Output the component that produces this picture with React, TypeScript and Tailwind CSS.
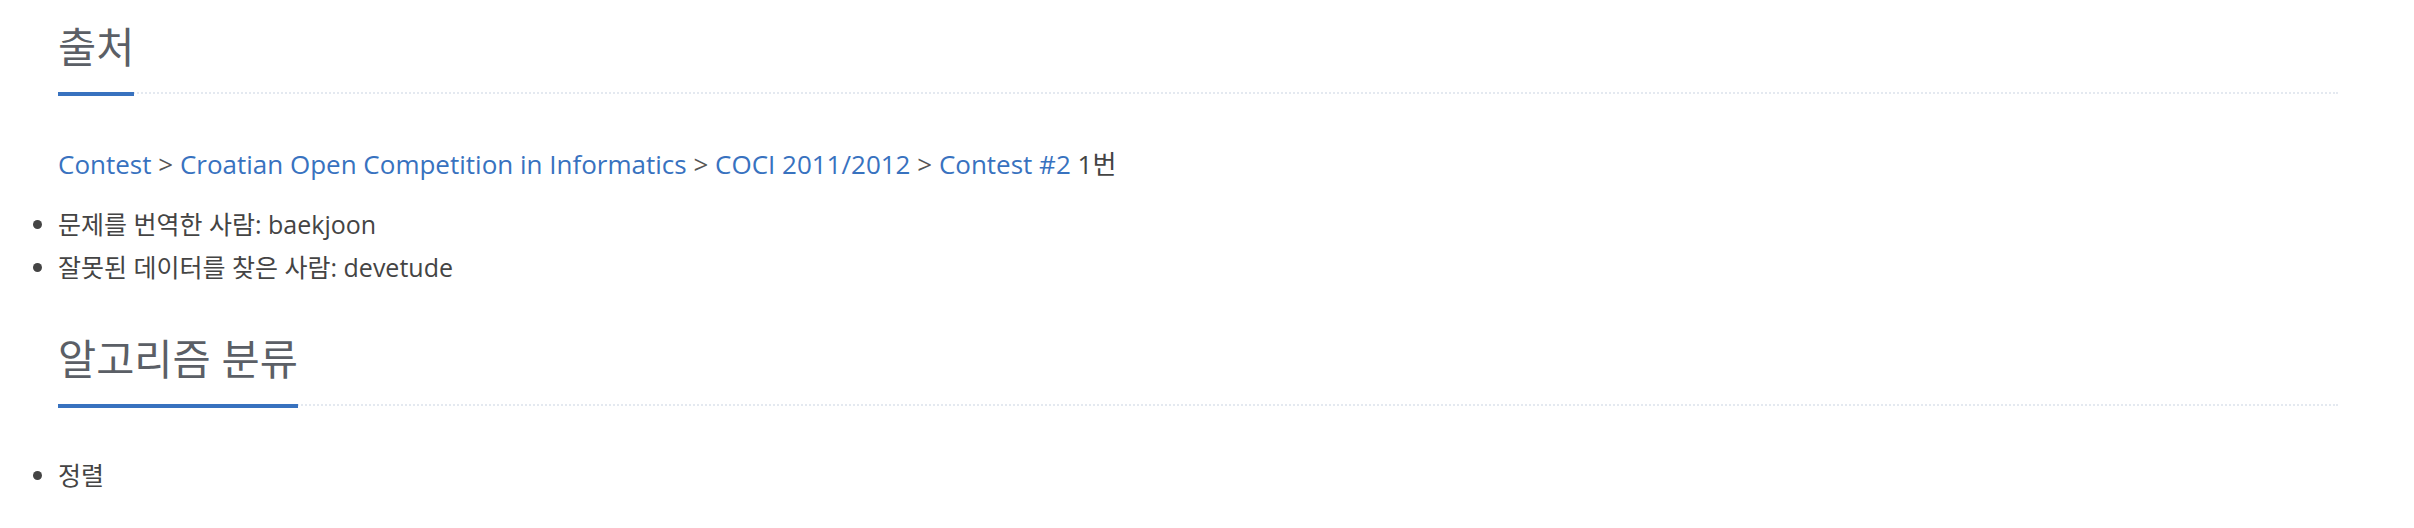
const font = { fontFamily: '"Open Sans", "Noto Sans CJK KR", sans-serif' }

function Headline({ title }: { title: string }) {
  return (
    <div className="flex border-b-2 border-dotted border-[#e4e9f0]">
      <h2 className="-mb-[4px] border-b-4 border-[#3872bf] pb-[22px] text-[41.5px] font-normal leading-[46px] text-[#5b5f66]">
        {title}
      </h2>
    </div>
  )
}

export default function App() {
  return (
    <div className="w-[2414px] bg-white pt-[24px] pl-[58px]" style={font}>
      <div className="w-[2280px]">
        <Headline title="출처" />

        <p className="mt-[49px] text-[26px] leading-[43px] text-[#444]">
          <a className="text-[#3872bf]">Contest</a>
          <span className="text-[#555]"> &gt; </span>
          <a className="text-[#3872bf]">Croatian Open Competition in Informatics</a>
          <span className="text-[#555]"> &gt; </span>
          <a className="text-[#3872bf]">COCI 2011/2012</a>
          <span className="text-[#555]"> &gt; </span>
          <a className="text-[#3872bf]">Contest #2</a> 1번
        </p>

        <ul className="mt-[17px] list-disc text-[25px] leading-[43px] text-[#444]">
          <li>문제를 번역한 사람: baekjoon</li>
          <li>잘못된 데이터를 찾은 사람: devetude</li>
        </ul>

        <div className="mt-[47px]">
          <Headline title="알고리즘 분류" />
        </div>

        <ul className="mt-[48px] pb-[30px] list-disc text-[25px] leading-[43px] text-[#444]">
          <li>정렬</li>
        </ul>
      </div>
    </div>
  )
}
